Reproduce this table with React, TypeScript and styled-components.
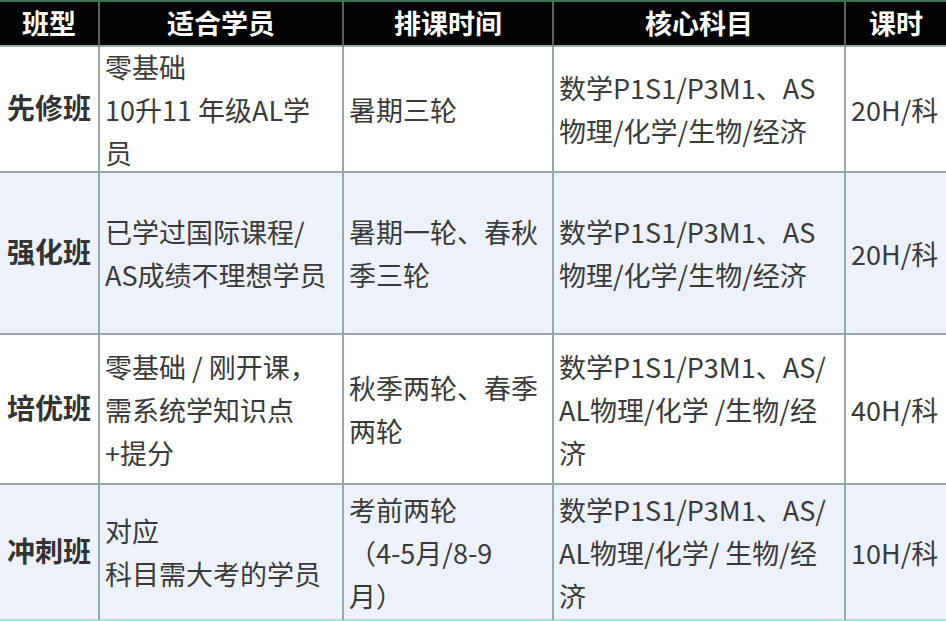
import { createGlobalStyle, styled } from "styled-components";

const GlobalStyle = createGlobalStyle`
  html, body {
    margin: 0;
    padding: 0;
    background: #ffffff;
  }
  body {
    font-family: "Noto Sans CJK SC", "Noto Sans", sans-serif;
  }
`;

const Table = styled.div`
  display: grid;
  grid-template-columns: 100px 244px 210px 292px 100px;
  grid-template-rows: 47px 126px 162px 150px 136px;
  width: 946px;
  height: 621px;
  overflow: hidden;
`;

const HeadCell = styled.div<{ $last?: boolean }>`
  box-sizing: border-box;
  display: flex;
  align-items: center;
  justify-content: center;
  background: #020202;
  color: #ffffff;
  font-size: 27px;
  font-weight: 700;
  border-top: 2px solid #3b7452;
  border-right: ${(p) => (p.$last ? "none" : "2px solid #55655c")};
  border-bottom: 2px solid #9aa9ab;
  padding-bottom: 2px;
`;

const Cell = styled.div<{ $alt?: boolean; $last?: boolean; $bottom?: boolean }>`
  box-sizing: border-box;
  display: flex;
  flex-direction: column;
  justify-content: center;
  background: ${(p) => (p.$alt ? "#edf1fb" : "#ffffff")};
  color: #3a3a3a;
  font-size: 27px;
  line-height: 43px;
  padding: 0 6px 0 5px;
  border-right: ${(p) => (p.$last ? "none" : "2px solid #98a8aa")};
  border-bottom: 2px solid ${(p) => (p.$bottom ? "#b5e3d2" : "#98a8aa")};
  white-space: nowrap;
`;

const NameCell = styled(Cell)`
  align-items: center;
  font-size: 28px;
  font-weight: 700;
  color: #333333;
  padding: 0 0 4px;
`;

const Line = styled.div``;

interface Course {
  name: string;
  students: string[];
  schedule: string[];
  subjects: string[];
  hours: string;
}

const courses: Course[] = [
  {
    name: "先修班",
    students: ["零基础", "10升11 年级AL学", "员"],
    schedule: ["暑期三轮"],
    subjects: ["数学P1S1/P3M1、AS", "物理/化学/生物/经济"],
    hours: "20H/科",
  },
  {
    name: "强化班",
    students: ["已学过国际课程/", "AS成绩不理想学员"],
    schedule: ["暑期一轮、春秋", "季三轮"],
    subjects: ["数学P1S1/P3M1、AS", "物理/化学/生物/经济"],
    hours: "20H/科",
  },
  {
    name: "培优班",
    students: ["零基础 / 刚开课，", "需系统学知识点", "+提分"],
    schedule: ["秋季两轮、春季", "两轮"],
    subjects: ["数学P1S1/P3M1、AS/", "AL物理/化学 /生物/经", "济"],
    hours: "40H/科",
  },
  {
    name: "冲刺班",
    students: ["对应", "科目需大考的学员"],
    schedule: ["考前两轮", "（4-5月/8-9", "月）"],
    subjects: ["数学P1S1/P3M1、AS/", "AL物理/化学/ 生物/经", "济"],
    hours: "10H/科",
  },
];

const headers = ["班型", "适合学员", "排课时间", "核心科目", "课时"];

function Lines({ items }: { items: string[] }) {
  return (
    <>
      {items.map((t, i) => (
        <Line key={i}>{t}</Line>
      ))}
    </>
  );
}

export default function App() {
  return (
    <>
      <GlobalStyle />
      <Table>
        {headers.map((h, i) => (
          <HeadCell key={h} $last={i === headers.length - 1}>
            {h}
          </HeadCell>
        ))}
        {courses.map((c, i) => {
          const alt = i % 2 === 1;
          const bottom = i === courses.length - 1;
          return [
            <NameCell key={c.name + "n"} $alt={alt} $bottom={bottom}>
              {c.name}
            </NameCell>,
            <Cell key={c.name + "s"} $alt={alt} $bottom={bottom}>
              <Lines items={c.students} />
            </Cell>,
            <Cell key={c.name + "t"} $alt={alt} $bottom={bottom}>
              <Lines items={c.schedule} />
            </Cell>,
            <Cell key={c.name + "k"} $alt={alt} $bottom={bottom}>
              <Lines items={c.subjects} />
            </Cell>,
            <Cell key={c.name + "h"} $alt={alt} $bottom={bottom} $last>
              {c.hours}
            </Cell>,
          ];
        })}
      </Table>
    </>
  );
}
